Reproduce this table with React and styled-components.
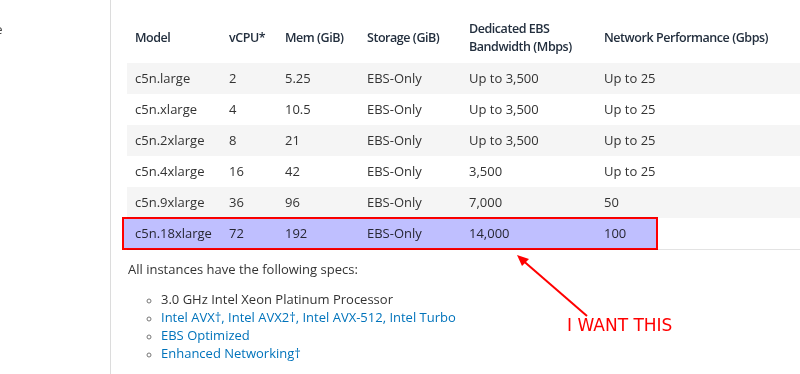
import styled, { createGlobalStyle } from "styled-components";

const GlobalStyle = createGlobalStyle`
  html, body {
    margin: 0;
    padding: 0;
    background: #fff;
    overflow: hidden;
  }
  body {
    font-family: "Open Sans", "Noto Sans", sans-serif;
    color: #333;
  }
`;

const Page = styled.div`
  display: flex;
  width: 800px;
  height: 374px;
  position: relative;
  overflow: hidden;
`;

const Sidebar = styled.aside`
  flex: 0 0 111px;
  border-right: 1px solid #dcdcdc;
  padding-top: 20px;
  box-sizing: border-box;
  overflow: hidden;
`;

const NavItem = styled.div`
  margin-left: -44px;
  font-size: 13px;
  line-height: 19px;
  color: #444;
  white-space: nowrap;
`;

const Content = styled.main`
  flex: 1;
  padding: 10px 0 0 16px;
  min-width: 0;
`;

const TableWrap = styled.div`
  position: relative;
  width: 700px;
`;

const Table = styled.table`
  width: 700px;
  table-layout: fixed;
  border-collapse: collapse;
  font-size: 13px;
  border-bottom: 1px solid #e3e3e3;
`;

const Th = styled.th`
  width: ${({ $w }) => ($w ? `${$w}px` : "auto")};
  text-align: left;
  vertical-align: middle;
  padding: 10px 8px 7px;
  line-height: 18px;
  font-size: 12.5px;
  font-weight: 600;
  color: #232f3e;
  letter-spacing: -0.45px;
`;

const Row = styled.tr`
  background: ${({ $alt }) => ($alt ? "#f5f5f5" : "#fff")};
`;

const Td = styled.td`
  padding: 6px 8px;
  line-height: 19px;
  color: #333;
  white-space: nowrap;
`;

const Highlight = styled.div`
  position: absolute;
  left: -5px;
  bottom: 0;
  width: 536px;
  height: 33px;
  box-sizing: border-box;
  border: 2px solid #ff0000;
  background: #bfbfff;
  mix-blend-mode: multiply;
`;

const Note = styled.p`
  margin: 10px 0 0 1px;
  font-size: 13px;
  line-height: 19px;
  color: #333;
`;

const Specs = styled.ul`
  margin: 11px 0 0;
  padding-left: 34px;
  list-style: circle;
  font-size: 13px;
  line-height: 18px;

  li::marker {
    color: #777;
    font-size: 10px;
  }
`;

const Spec = styled.li`
  color: ${({ $link }) => ($link ? "#0073bb" : "#333")};
`;

const Annotation = styled.div`
  position: absolute;
  left: 0;
  top: 0;
  width: 800px;
  height: 374px;
  pointer-events: none;
`;

const Callout = styled.span`
  position: absolute;
  left: 567px;
  top: 313px;
  font-family: "DejaVu Sans", sans-serif;
  font-size: 17px;
  line-height: 24px;
  color: #ff0000;
  white-space: nowrap;
`;

const rows = [
  ["c5n.large", "2", "5.25", "EBS-Only", "Up to 3,500", "Up to 25"],
  ["c5n.xlarge", "4", "10.5", "EBS-Only", "Up to 3,500", "Up to 25"],
  ["c5n.2xlarge", "8", "21", "EBS-Only", "Up to 3,500", "Up to 25"],
  ["c5n.4xlarge", "16", "42", "EBS-Only", "3,500", "Up to 25"],
  ["c5n.9xlarge", "36", "96", "EBS-Only", "7,000", "50"],
  ["c5n.18xlarge", "72", "192", "EBS-Only", "14,000", "100"],
];

const specs = [
  { text: "3.0 GHz Intel Xeon Platinum Processor" },
  { text: "Intel AVX†, Intel AVX2†, Intel AVX-512, Intel Turbo", link: true },
  { text: "EBS Optimized", link: true },
  { text: "Enhanced Networking†", link: true },
];

function Arrow() {
  return (
    <svg
      width="800"
      height="374"
      viewBox="0 0 800 374"
      style={{ position: "absolute", left: 0, top: 0 }}
    >
      <line x1="587" y1="316" x2="520" y2="258" stroke="#ff0000" strokeWidth="2" />
      <polygon points="517,255 529,259 522,266" fill="#ff0000" />
    </svg>
  );
}

export default function App() {
  return (
    <>
      <GlobalStyle />
      <Page>
        <Sidebar>
          <NavItem>Storage</NavItem>
        </Sidebar>
        <Content>
          <TableWrap>
            <Table>
              <thead>
                <tr>
                  <Th $w={78}>Model</Th>
                  <Th $w={40}>vCPU*</Th>
                  <Th $w={66}>Mem (GiB)</Th>
                  <Th $w={86}>Storage (GiB)</Th>
                  <Th $w={119}>Dedicated EBS Bandwidth (Mbps)</Th>
                  <Th>Network Performance (Gbps)</Th>
                </tr>
              </thead>
              <tbody>
                {rows.map((r, i) => (
                  <Row key={r[0]} $alt={i % 2 === 0}>
                    {r.map((c, j) => (
                      <Td key={j}>{c}</Td>
                    ))}
                  </Row>
                ))}
              </tbody>
            </Table>
            <Highlight />
          </TableWrap>
          <Note>All instances have the following specs:</Note>
          <Specs>
            {specs.map((s) => (
              <Spec key={s.text} $link={s.link}>
                {s.text}
              </Spec>
            ))}
          </Specs>
        </Content>
        <Annotation>
          <Arrow />
          <Callout>I WANT THIS</Callout>
        </Annotation>
      </Page>
    </>
  );
}
